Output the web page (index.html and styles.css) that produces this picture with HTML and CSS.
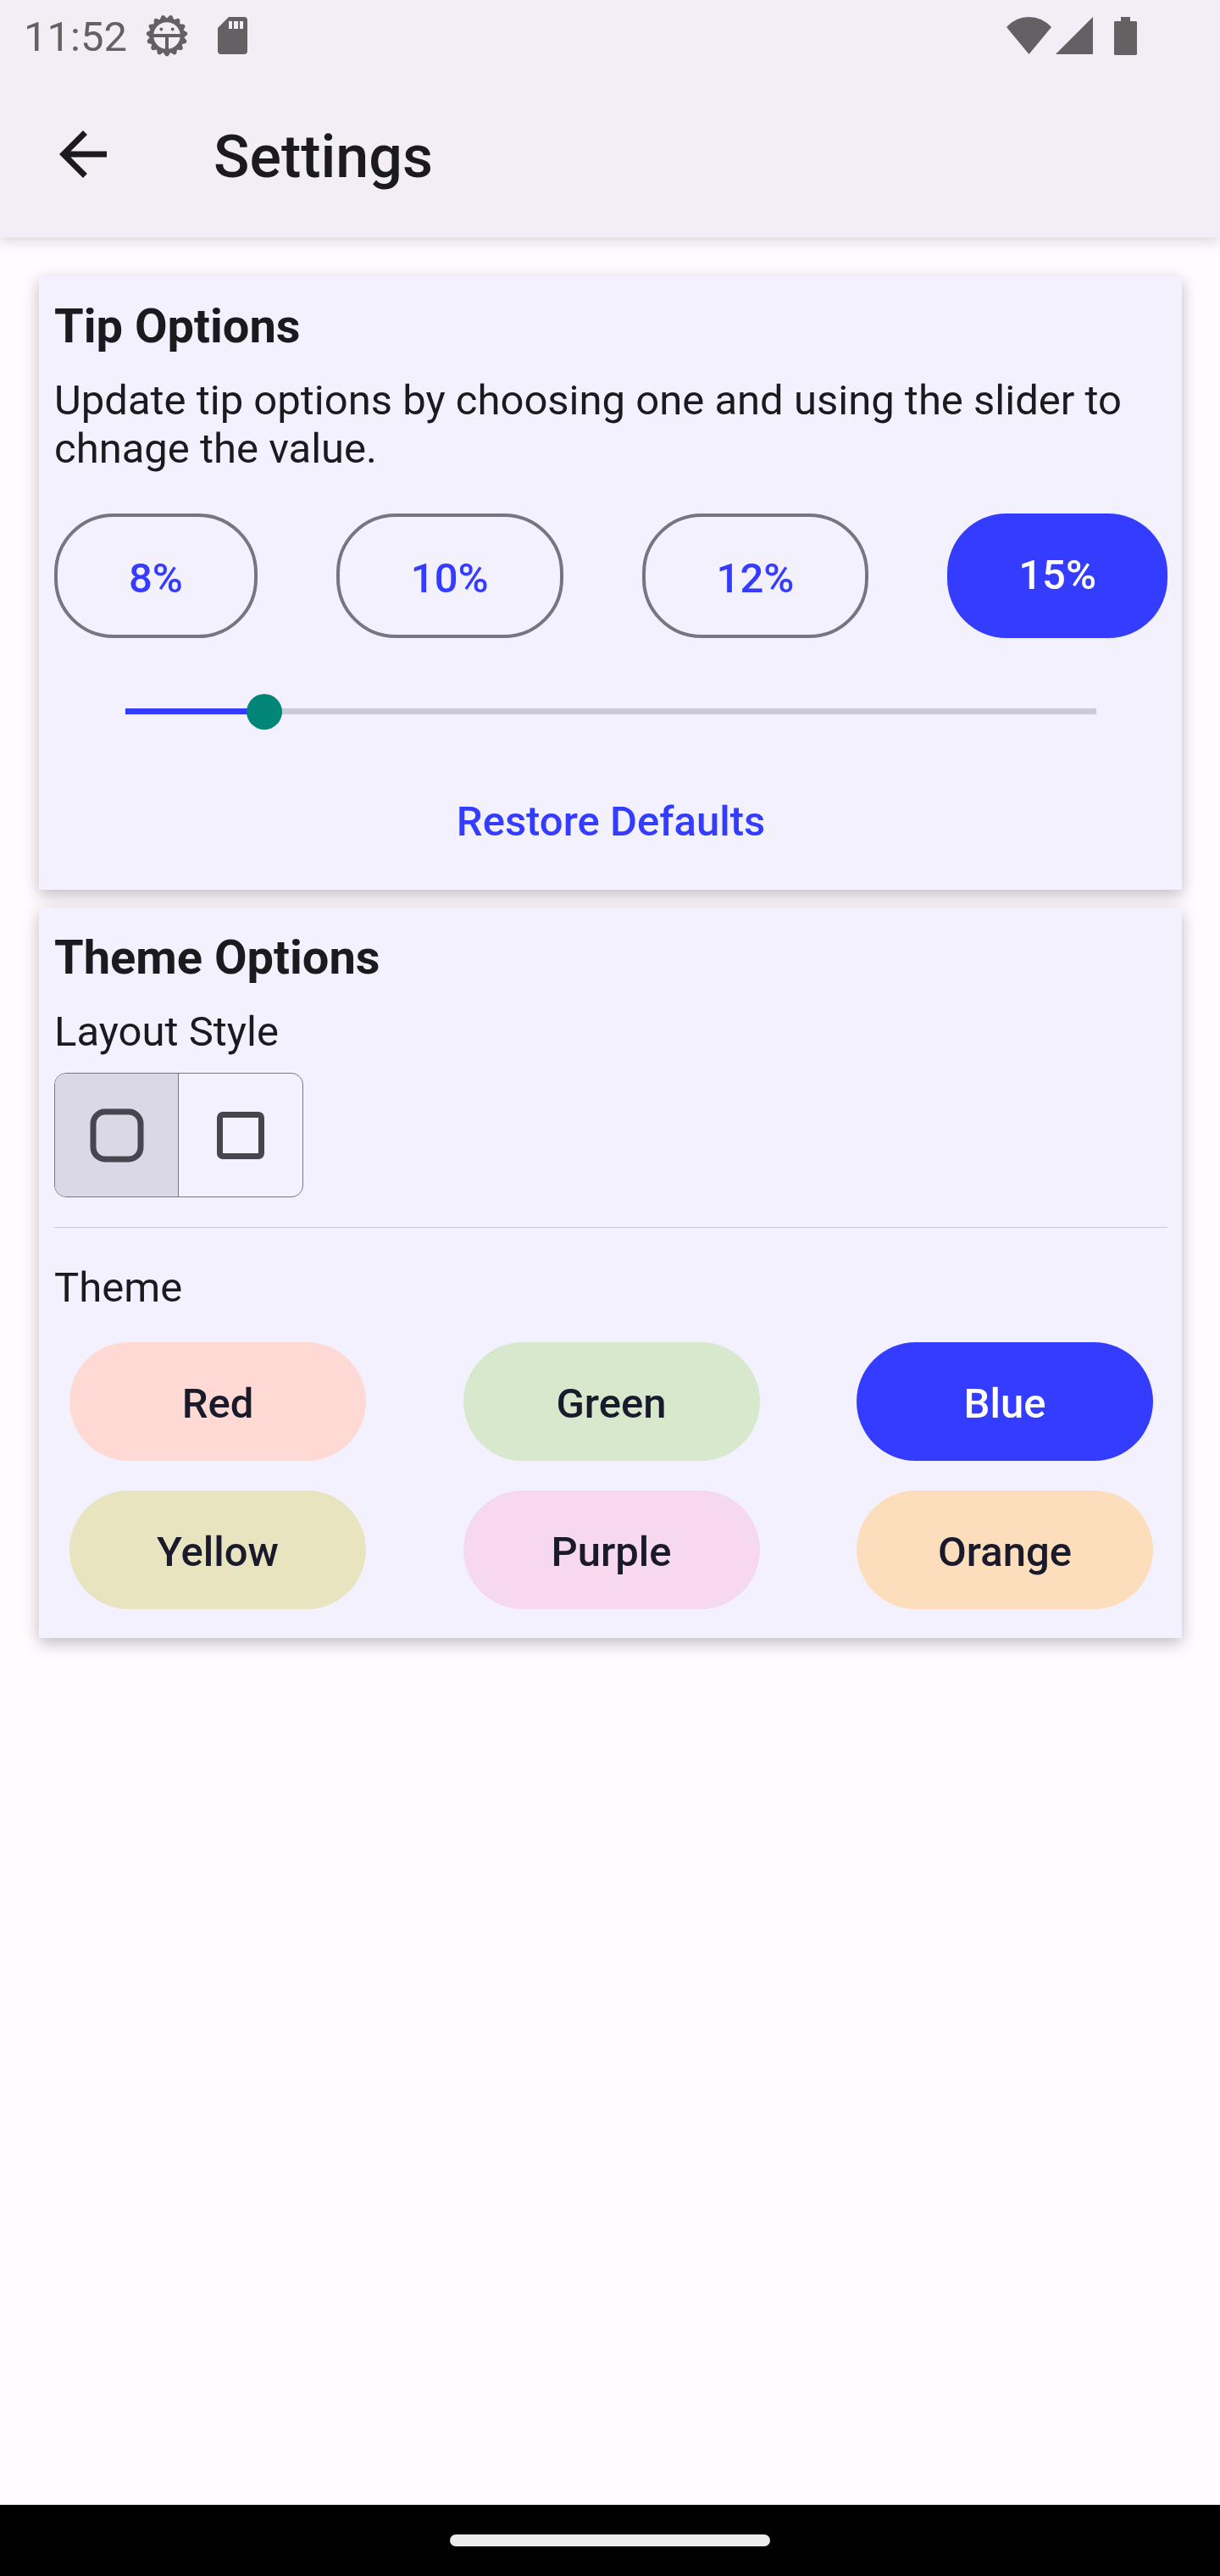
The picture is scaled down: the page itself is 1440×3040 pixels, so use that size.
FILE: index.html
```html
<!DOCTYPE html>
<html lang="en">
<head>
<meta charset="utf-8">
<meta name="viewport" content="width=device-width, initial-scale=1">
<title>Settings</title>
<link rel="stylesheet" href="styles.css">
</head>
<body>
<div class="screen">
  <header class="top">
    <div class="status">
      <span class="clock">11:52</span>
      <svg class="gear" viewBox="0 0 50 50" aria-hidden="true">
        <defs><path id="tooth" d="M21 44L24 48.500h2L29 44z" fill="currentColor" stroke="currentColor" stroke-width="1.500" stroke-linejoin="round"/></defs>
        <circle cx="25" cy="25" r="18" fill="none" stroke="currentColor" stroke-width="4.500"/>
        <use href="#tooth"/>
        <use href="#tooth" transform="rotate(24 25 25)"/>
        <use href="#tooth" transform="rotate(48 25 25)"/>
        <use href="#tooth" transform="rotate(72 25 25)"/>
        <use href="#tooth" transform="rotate(96 25 25)"/>
        <use href="#tooth" transform="rotate(120 25 25)"/>
        <use href="#tooth" transform="rotate(144 25 25)"/>
        <use href="#tooth" transform="rotate(168 25 25)"/>
        <use href="#tooth" transform="rotate(192 25 25)"/>
        <use href="#tooth" transform="rotate(216 25 25)"/>
        <use href="#tooth" transform="rotate(240 25 25)"/>
        <use href="#tooth" transform="rotate(264 25 25)"/>
        <use href="#tooth" transform="rotate(288 25 25)"/>
        <use href="#tooth" transform="rotate(312 25 25)"/>
        <use href="#tooth" transform="rotate(336 25 25)"/>
        <path d="M9 23h32v4H27v15h-4V27H9z" fill="currentColor"/>
        <circle cx="18.300" cy="17.500" r="1.900" fill="currentColor"/>
        <circle cx="31.700" cy="17.500" r="1.900" fill="currentColor"/>
      </svg>
      <svg class="sd" viewBox="0 0 35 44" aria-hidden="true">
        <path fill="currentColor" fill-rule="evenodd" d="M13 0h18a4 4 0 0 1 4 4v36a4 4 0 0 1-4 4H4a4 4 0 0 1-4-4V13zM13 5v9h4V5zm6 0v9h5V5zm7 0v9h4V5z"/>
      </svg>
      <svg class="wifi" viewBox="0 0 53 45" aria-hidden="true"><path fill="currentColor" d="M0 12Q11 0 26.500 0T53 12L26.500 44z"/></svg>
      <svg class="signal" viewBox="0 0 44 44" aria-hidden="true"><path fill="currentColor" d="M44 0v44H0z"/></svg>
      <svg class="battery" viewBox="0 0 27 45" aria-hidden="true"><path fill="currentColor" d="M8 0h11v5h7l1 1v38l-1 1H1l-1-1V6l1-1h7z"/></svg>
    </div>
    <div class="appbar">
      <button class="back" type="button" aria-label="Back">
        <svg viewBox="0 0 24 24" aria-hidden="true"><path fill="currentColor" d="M20 11H7.830l5.590-5.590L12 4l-8 8 8 8 1.410-1.410L7.830 13H20z"/></svg>
      </button>
      <h1>Settings</h1>
    </div>
  </header>

  <main class="content">
    <section class="card tips">
      <h2>Tip Options</h2>
      <p class="text" id="tip-help">Update tip options by choosing one and using the slider to chnage the value.</p>
      <div class="tip-row">
        <button class="tip" type="button">8%</button>
        <button class="tip" type="button">10%</button>
        <button class="tip" type="button">12%</button>
        <button class="tip selected" type="button">15%</button>
      </div>
      <input class="slider" type="range" min="5" max="75" value="15" aria-label="Tip percentage" aria-describedby="tip-help">
      <button class="restore" type="button">Restore Defaults</button>
    </section>

    <section class="card themes">
      <h2>Theme Options</h2>
      <p class="text">Layout Style</p>
      <div class="toggle">
        <button type="button" class="on" aria-label="Rounded corners">
          <svg viewBox="0 0 24 24" aria-hidden="true"><rect x="4" y="4" width="16" height="16" rx="4" fill="none" stroke="currentColor" stroke-width="2"/></svg>
        </button>
        <button type="button" aria-label="Square corners">
          <svg viewBox="0 0 24 24" aria-hidden="true"><path fill="currentColor" fill-rule="evenodd" d="M6 4h12a2 2 0 0 1 2 2v12a2 2 0 0 1-2 2H6a2 2 0 0 1-2-2V6a2 2 0 0 1 2-2zm0 2v12h12V6z"/></svg>
        </button>
      </div>
      <hr>
      <p class="text">Theme</p>
      <div class="swatches">
        <button type="button" class="swatch red">Red</button>
        <button type="button" class="swatch green">Green</button>
        <button type="button" class="swatch blue">Blue</button>
        <button type="button" class="swatch yellow">Yellow</button>
        <button type="button" class="swatch purple">Purple</button>
        <button type="button" class="swatch orange">Orange</button>
      </div>
    </section>
  </main>

  <footer class="navbar"><div class="pill"></div></footer>
</div>
</body>
</html>
```
FILE: styles.css
```css
* { box-sizing: border-box; }

body {
  margin: 0;
  background: #fffbff;
  color: #1b1b1f;
  font: 400 49px/57px Roboto, sans-serif;
}

h1, h2, p { margin: 0; }

button {
  margin: 0;
  padding: 0;
  border: 0;
  background: none;
  color: #343dff;
  font: 500 49px/57px Roboto, sans-serif;
}

svg { display: block; }

.screen {
  display: flex;
  flex-direction: column;
  min-height: 100vh;
}

.top {
  background: #f3eef5;
  box-shadow: 0 4px 16px rgba(0, 0, 0, 0.16);
}

.status {
  display: flex;
  align-items: center;
  height: 84px;
  padding: 0 98px 0 28px;
  color: #636164;
}

.clock { padding-top: 2px; }
.gear { width: 50px; height: 50px; margin: 0 35px 0 22px; }
.sd { width: 35px; height: 44px; margin-right: auto; }
.wifi { width: 53px; height: 45px; margin-right: 5px; }
.signal { width: 44px; height: 44px; margin-right: 25px; }
.battery { width: 27px; height: 45px; }

.appbar {
  display: flex;
  align-items: center;
  gap: 112px;
  height: 196px;
  padding: 0 56px;
}

.back { color: #1b1b1f; }
.back svg { width: 84px; height: 84px; }

h1 {
  padding-top: 6px;
  font: 500 70px/82px Roboto, sans-serif;
}

.content {
  display: flex;
  flex: 1;
  flex-direction: column;
  gap: 21px;
  padding: 46px 45px 46px 46px;
}

.card {
  display: flex;
  flex-direction: column;
  padding: 26px 17px 34px 18px;
  background: #f4f1ff;
  box-shadow: 0 6px 18px rgba(0, 0, 0, 0.26);
}

h2 {
  margin-bottom: 26px;
  font: 700 56px/66px Roboto, sans-serif;
}

.tip-row {
  display: flex;
  justify-content: space-between;
  margin-top: 48px;
}

.tip {
  height: 147px;
  padding: 6px 84px 0;
  border: 4px solid #777680;
  border-radius: 70px;
}

.tip.selected {
  padding: 0 84px 2px;
  border: 0;
  background: #343dff;
  color: #fff;
}

.slider {
  --fill: 0.143;
  appearance: none;
  height: 42px;
  margin: 65px 63px 0;
  background: none;
}

.slider::-webkit-slider-runnable-track {
  height: 7px;
  background: linear-gradient(to right,
    transparent 21px,
    #343dff 21px calc(21px + (100% - 42px) * var(--fill)),
    #cdcad5 0 calc(100% - 21px),
    transparent 0);
}

.slider::-webkit-slider-thumb {
  appearance: none;
  width: 42px;
  height: 42px;
  margin-top: -17px;
  border-radius: 50%;
  background: #008577;
}

.restore {
  align-self: center;
  margin: 81px 0 18px;
}

.toggle {
  display: flex;
  align-self: flex-start;
  overflow: hidden;
  margin-top: 20px;
  border: 1px solid #777680;
  border-radius: 14px;
}

.toggle button {
  display: grid;
  place-items: center;
  width: 146px;
  height: 145px;
  color: #46464f;
}

.toggle .on {
  background: #dad8e4;
  border-right: 1px solid #777680;
}

.toggle svg { width: 84px; height: 84px; }

hr {
  width: 100%;
  height: 1px;
  margin: 35px 0 42px;
  border: 0;
  background: #c7c5d0;
}

.swatches {
  display: grid;
  grid-template-columns: repeat(3, 350px);
  justify-content: space-between;
  gap: 35px 0;
  margin-top: 36px;
  padding: 0 17px 0 18px;
}

.swatch {
  height: 140px;
  padding-top: 4px;
  border-radius: 70px;
  color: #191a2c;
}

.red { background: #ffdad4; }
.green { background: #d7e8cd; }
.blue { background: #343dff; color: #fff; }
.yellow { background: #e8e4bf; }
.purple { background: #f7d9ef; }
.orange { background: #fddebc; }

.navbar {
  display: grid;
  place-items: center;
  height: 84px;
  background: #000;
}

.pill {
  width: 378px;
  height: 14px;
  border-radius: 7px;
  background: #ebebeb;
}
```
